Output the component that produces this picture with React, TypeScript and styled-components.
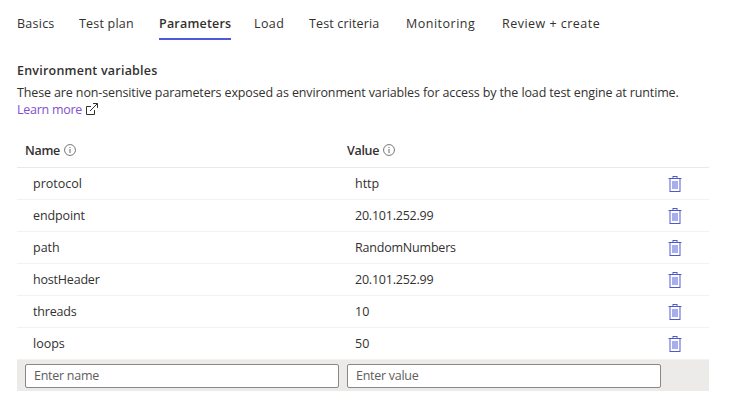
import React from "react";
import styled, { createGlobalStyle } from "styled-components";

const GlobalStyle = createGlobalStyle`
  * { box-sizing: border-box; }
  body {
    margin: 0;
    background: #fff;
    color: #323130;
    font-family: "Open Sans", "Noto Sans", sans-serif;
    font-size: 12.5px;
    line-height: 17px;
  }
`;

const Page = styled.main`
  width: 732px;
  height: 405px;
  padding: 9px 23px 0 17px;
  overflow: hidden;
`;

const Tabs = styled.nav`
  display: grid;
  grid-template-columns: 62px 80px 95px 55px 97px 96px 120px;
  justify-items: start;
  height: 31px;
`;

const Tab = styled.button<{ $active?: boolean; $spacing: number }>`
  height: 31px;
  padding: 0;
  border: 0;
  border-bottom: 2px solid ${(p) => (p.$active ? "#4f58d8" : "transparent")};
  background: none;
  color: inherit;
  font: inherit;
  font-weight: ${(p) => (p.$active ? 600 : 400)};
  letter-spacing: ${(p) => p.$spacing}px;
  white-space: nowrap;
`;

const Heading = styled.h1`
  margin: 22px 0 5px;
  font-size: 12.5px;
  line-height: 17px;
  font-weight: 600;
  letter-spacing: 0.22px;
`;

const Description = styled.p`
  margin: 0;
  letter-spacing: -0.125px;
  white-space: nowrap;
`;

const LearnMore = styled.a`
  display: flex;
  align-items: center;
  gap: 4px;
  height: 17px;
  color: #8250cf;
  letter-spacing: -0.27px;

  svg {
    margin-top: -2px;
  }
`;

const Table = styled.section`
  width: 692px;
  margin-top: 16px;
`;

const Row = styled.div`
  display: grid;
  grid-template-columns: 322px 320px 1fr;
  align-items: center;
  height: 32px;
  padding-left: 16px;
  border-bottom: 1px solid #f3f2f1;
`;

const HeaderRow = styled(Row)`
  height: 34px;
  padding-left: 8px;
  border-color: #e9e8e7;
  font-weight: 600;
`;

const HeaderCell = styled.div`
  display: flex;
  align-items: center;
  gap: 4px;
  letter-spacing: -0.3px;

  svg {
    margin-top: -1px;
  }
`;

const Cell = styled.span<{ $spacing?: number }>`
  letter-spacing: ${(p) => p.$spacing ?? 0}px;
`;

const DeleteButton = styled.button`
  display: flex;
  width: 14px;
  height: 16px;
  margin: 0 0 0 -7px;
  padding: 0;
  border: 0;
  background: none;
`;

const EntryRow = styled.div`
  display: flex;
  align-items: flex-start;
  gap: 8px;
  height: 31px;
  padding: 4px 8px 0;
  background: #edebe9;
`;

const Input = styled.input`
  width: 314px;
  height: 24px;
  padding: 0 8px 1px;
  border: 1px solid #8a8886;
  border-radius: 2px;
  background: #fff;
  color: #323130;
  font: inherit;
  letter-spacing: -0.27px;
  &::placeholder {
    color: #605e5c;
    opacity: 1;
  }
`;

const InfoIcon = () => (
  <svg width="12" height="12" viewBox="0 0 12 12" aria-hidden="true">
    <circle cx="6" cy="6" r="5.45" fill="none" stroke="#6b6967" strokeWidth="0.9" />
    <path d="M6 5v4M6 3v1" stroke="#6b6967" strokeWidth="1" />
  </svg>
);

const ExternalIcon = () => (
  <svg width="12" height="12" viewBox="0 0 12 12" fill="none" stroke="#323130" aria-hidden="true">
    <path d="M5 3.5H.5v8h8V7M4 8l7.3-7.3M7 .5h4.5V5" />
  </svg>
);

const TrashIcon = () => (
  <svg width="14" height="16" viewBox="0 0 14 16" shapeRendering="crispEdges" aria-hidden="true">
    <path d="M0 2h14v1H0zM4 0h6v2H4zM1 3h2v12H1zM11 3h2v12h-2zM1 15h12v1H1zM4 5h6v8H4z" fill="#a9adeb" />
    <path d="M5 0h4v1H5zM1 2h12v1H1zM2 15h10v1H2z" fill="#4f58d0" />
    <path d="M6 1h2v1H6z" fill="#fff" />
  </svg>
);

const tabs = [
  { label: "Basics", spacing: 0.25 },
  { label: "Test plan", spacing: 0.2 },
  { label: "Parameters", spacing: 0.2, active: true },
  { label: "Load", spacing: 0.4 },
  { label: "Test criteria", spacing: 0.14 },
  { label: "Monitoring", spacing: 0.5 },
  { label: "Review + create", spacing: 0.48 },
];

const variables = [
  { name: "protocol", value: "http", nameSpacing: 0, valueSpacing: 0 },
  { name: "endpoint", value: "20.101.252.99", nameSpacing: -0.1, valueSpacing: -0.22 },
  { name: "path", value: "RandomNumbers", nameSpacing: 0, valueSpacing: -0.2 },
  { name: "hostHeader", value: "20.101.252.99", nameSpacing: -0.2, valueSpacing: -0.22 },
  { name: "threads", value: "10", nameSpacing: -0.2, valueSpacing: 0 },
  { name: "loops", value: "50", nameSpacing: 0, valueSpacing: 0 },
];

export default function App() {
  return (
    <>
      <GlobalStyle />
      <Page>
        <Tabs>
          {tabs.map((t) => (
            <Tab key={t.label} $active={t.active} $spacing={t.spacing}>{t.label}</Tab>
          ))}
        </Tabs>
        <Heading>Environment variables</Heading>
        <Description>
          These are non-sensitive parameters exposed as environment variables for access by the load test engine at runtime.
        </Description>
        <LearnMore>Learn more <ExternalIcon /></LearnMore>
        <Table>
          <HeaderRow>
            <HeaderCell>Name <InfoIcon /></HeaderCell>
            <HeaderCell>Value <InfoIcon /></HeaderCell>
          </HeaderRow>
          {variables.map((v) => (
            <Row key={v.name}>
              <Cell $spacing={v.nameSpacing}>{v.name}</Cell>
              <Cell $spacing={v.valueSpacing}>{v.value}</Cell>
              <DeleteButton aria-label="Delete"><TrashIcon /></DeleteButton>
            </Row>
          ))}
          <EntryRow>
            <Input placeholder="Enter name" />
            <Input placeholder="Enter value" />
          </EntryRow>
        </Table>
      </Page>
    </>
  );
}
